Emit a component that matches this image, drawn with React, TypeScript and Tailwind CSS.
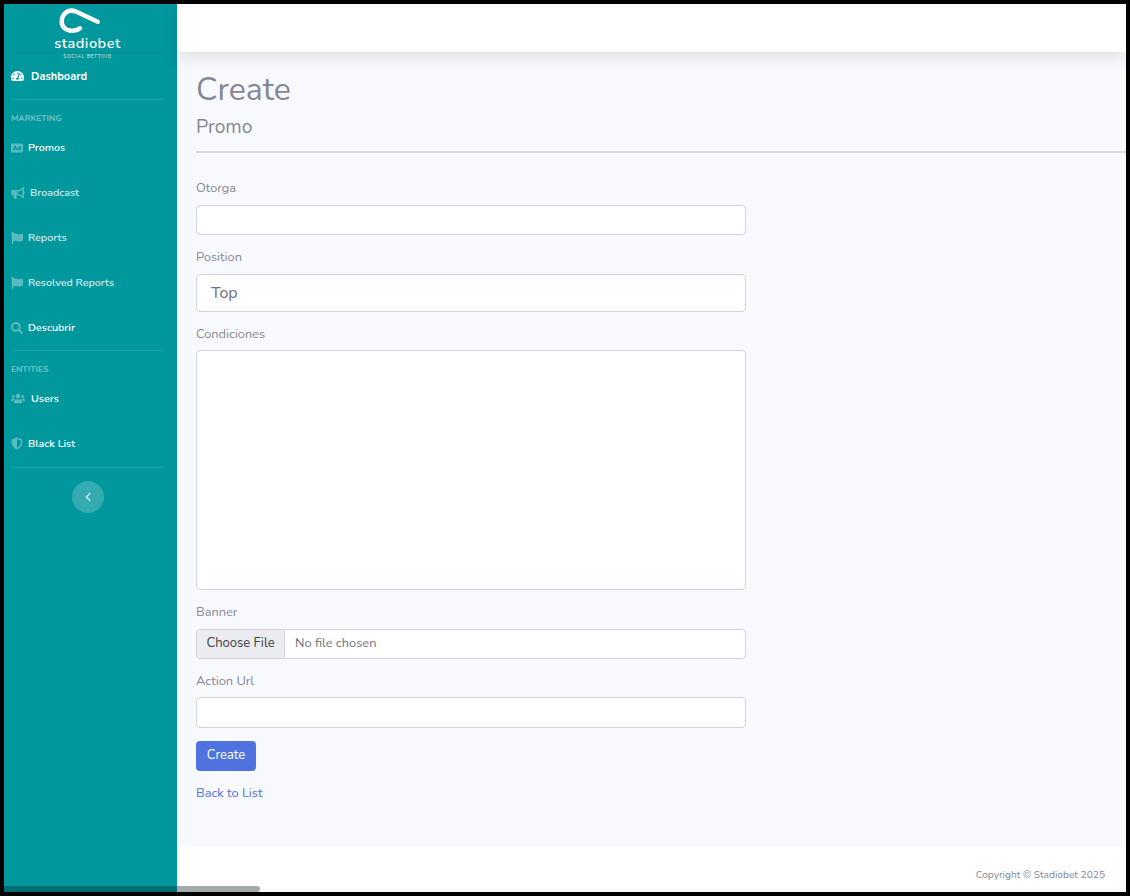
import { FaTachometerAlt, FaAd, FaBullhorn, FaFlag, FaSearch, FaUsers, FaShieldAlt, FaChevronLeft } from 'react-icons/fa'
import type { IconType } from 'react-icons'

function NavItem({ icon: Icon, label, iconCls, iconColor = 'text-white/35', textCls = 'text-[10.7px] font-semibold text-white', gap = 'gap-[5px]', className = '' }: { icon: IconType; label: string; iconCls: string; iconColor?: string; textCls?: string; gap?: string; className?: string }) {
  return (
    <div className={`flex h-[45px] items-center pl-[7px] ${gap} ${className}`}>
      <Icon className={`shrink-0 -translate-y-px ${iconColor} ${iconCls}`} />
      <span className={textCls}>{label}</span>
    </div>
  )
}

function Divider({ className = '' }: { className?: string }) {
  return <div className={`ml-[7px] h-px w-[153px] bg-white/10 ${className}`} />
}

function SectionTitle({ children }: { children: string }) {
  return <div className="pl-[7px] text-[8.4px] font-extrabold uppercase leading-[12px] text-white/40">{children}</div>
}

function Label({ children }: { children: string }) {
  return <label className="block text-[12.8px] leading-[18px] text-[#858796]">{children}</label>
}

const inputCls = 'block w-[550px] rounded-[4px] border border-[#d1d3e2] bg-white'
const dimText = 'text-[10.7px] font-semibold text-white/80'

export default function App() {
  return (
    <div className="relative h-screen w-full overflow-hidden bg-black p-[4px] font-['Nunito','Lato','Noto_Sans',sans-serif]">
      <div className="flex h-[888px] w-[1122px] overflow-hidden bg-white">
        <aside className="w-[173px] shrink-0 bg-[#00979d] pr-[6px]">
          <div className="flex h-[48px] flex-col items-center">
            <svg viewBox="0 0 46 30" className="ml-[52px] mt-[2px] h-[30px] w-[46px] self-start" fill="none" stroke="white" strokeWidth="4.5" strokeLinecap="round">
              <path d="M41.7 15.7 L20 5.5 C12 2.5 5.7 8 5.7 15.7 C5.7 21 10 24.7 15.7 24.7 C19 24.7 22 24 24 22.3" />
            </svg>
            <span className="text-[14.5px] font-semibold leading-[14px] tracking-[0.5px] text-white">stadiobet</span>
          </div>
          <div className="ml-[7px] h-px w-[153px] bg-black/10" />
          <div className="h-[6px] pt-[1px] text-center text-[5px] leading-[5px] tracking-[0.6px] text-white/80">SOCIAL BETTING</div>
          <NavItem icon={FaTachometerAlt} label="Dashboard" iconCls="h-[12px] w-[13px]" iconColor="text-white/95" gap="gap-[7px]" textCls="text-[11px] font-bold text-white" className="-mt-[5px] pt-px" />
          <Divider />
          <div className="h-[13px]" />
          <SectionTitle>Marketing</SectionTitle>
          <div className="h-px" />
          <NavItem icon={FaAd} label="Promos" iconCls="h-[12px] w-[12px]" />
          <NavItem icon={FaBullhorn} label="Broadcast" iconCls="h-[12px] w-[14px]" textCls={dimText} />
          <NavItem icon={FaFlag} label="Reports" iconCls="h-[12px] w-[12px]" textCls={dimText} />
          <NavItem icon={FaFlag} label="Resolved Reports" iconCls="h-[12px] w-[12px]" textCls={dimText} />
          <NavItem icon={FaSearch} label="Descubrir" iconCls="h-[12px] w-[12px]" />
          <Divider className="-mt-px" />
          <div className="h-[13px]" />
          <SectionTitle>Entities</SectionTitle>
          <div className="h-px" />
          <NavItem icon={FaUsers} label="Users" iconCls="h-[11px] w-[14px]" gap="gap-[6px]" />
          <NavItem icon={FaShieldAlt} label="Black List" iconCls="h-[13px] w-[12px]" />
          <Divider />
          <div className="flex justify-center pt-[13px]">
            <div className="flex h-[32px] w-[32px] items-center justify-center rounded-full bg-white/20">
              <FaChevronLeft className="h-[10px] w-[10px] text-white/70" />
            </div>
          </div>
        </aside>
        <div className="flex min-w-0 flex-1 flex-col">
          <header className="relative z-10 h-[48px] shrink-0 bg-white shadow-[0_4px_16px_rgba(58,59,69,0.15)]" />
          <main className="flex-1 bg-[#f8f9fc] pl-[19px]">
            <h1 className="pt-[18px] text-[32px] font-normal leading-[40px] text-[#858796]">Create</h1>
            <h2 className="mt-[5px] text-[19.2px] leading-[24px] text-[#858796]">Promo</h2>
            <div className="mt-[12px] h-[2px] bg-[#d9dae2]" />
            <div className="mt-[26px]"><Label>Otorga</Label></div>
            <input className={`${inputCls} mt-[8px] h-[30px]`} />
            <div className="mt-[13px]"><Label>Position</Label></div>
            <div className={`${inputCls} mt-[8px] flex h-[38px] items-center pl-[14px] text-[16px] text-[#6e707e]`}>Top</div>
            <div className="mt-[13px]"><Label>Condiciones</Label></div>
            <textarea className={`${inputCls} mt-[7px] h-[240px] resize-none`} />
            <div className="mt-[13px]"><Label>Banner</Label></div>
            <div className={`${inputCls} mt-[8px] flex h-[30px] items-center overflow-hidden text-[12.8px]`}>
              <span className="flex h-full w-[88px] items-center justify-center border-r border-[#d1d3e2] bg-[#eaecf0] text-[13px] text-[#3d4048]">Choose File</span>
              <span className="pl-[10px] text-[#6e707e]">No file chosen</span>
            </div>
            <div className="mt-[13px]"><Label>Action Url</Label></div>
            <input className={`${inputCls} mt-[7px] h-[31px]`} />
            <button className="mt-[13px] flex h-[30px] w-[60px] items-center justify-center rounded-[4px] bg-[#4e73df] text-[13px] text-white">Create</button>
            <a className="mt-[13px] block text-[12.8px] leading-[18px] text-[#4e73df]">Back to List</a>
          </main>
          <footer className="flex h-[46px] shrink-0 items-start justify-end bg-white pr-[21px] pt-[21px] text-[10.2px] leading-[16px] text-[#858796]">
            Copyright © Stadiobet 2025
          </footer>
        </div>
      </div>
      <div className="absolute bottom-[4px] left-[4px] flex h-[6px]">
        <div className="w-[173px] bg-[#026e73]" />
        <div className="w-[83px] rounded-r-[3px] bg-[#a5aaa9]" />
      </div>
    </div>
  )
}
